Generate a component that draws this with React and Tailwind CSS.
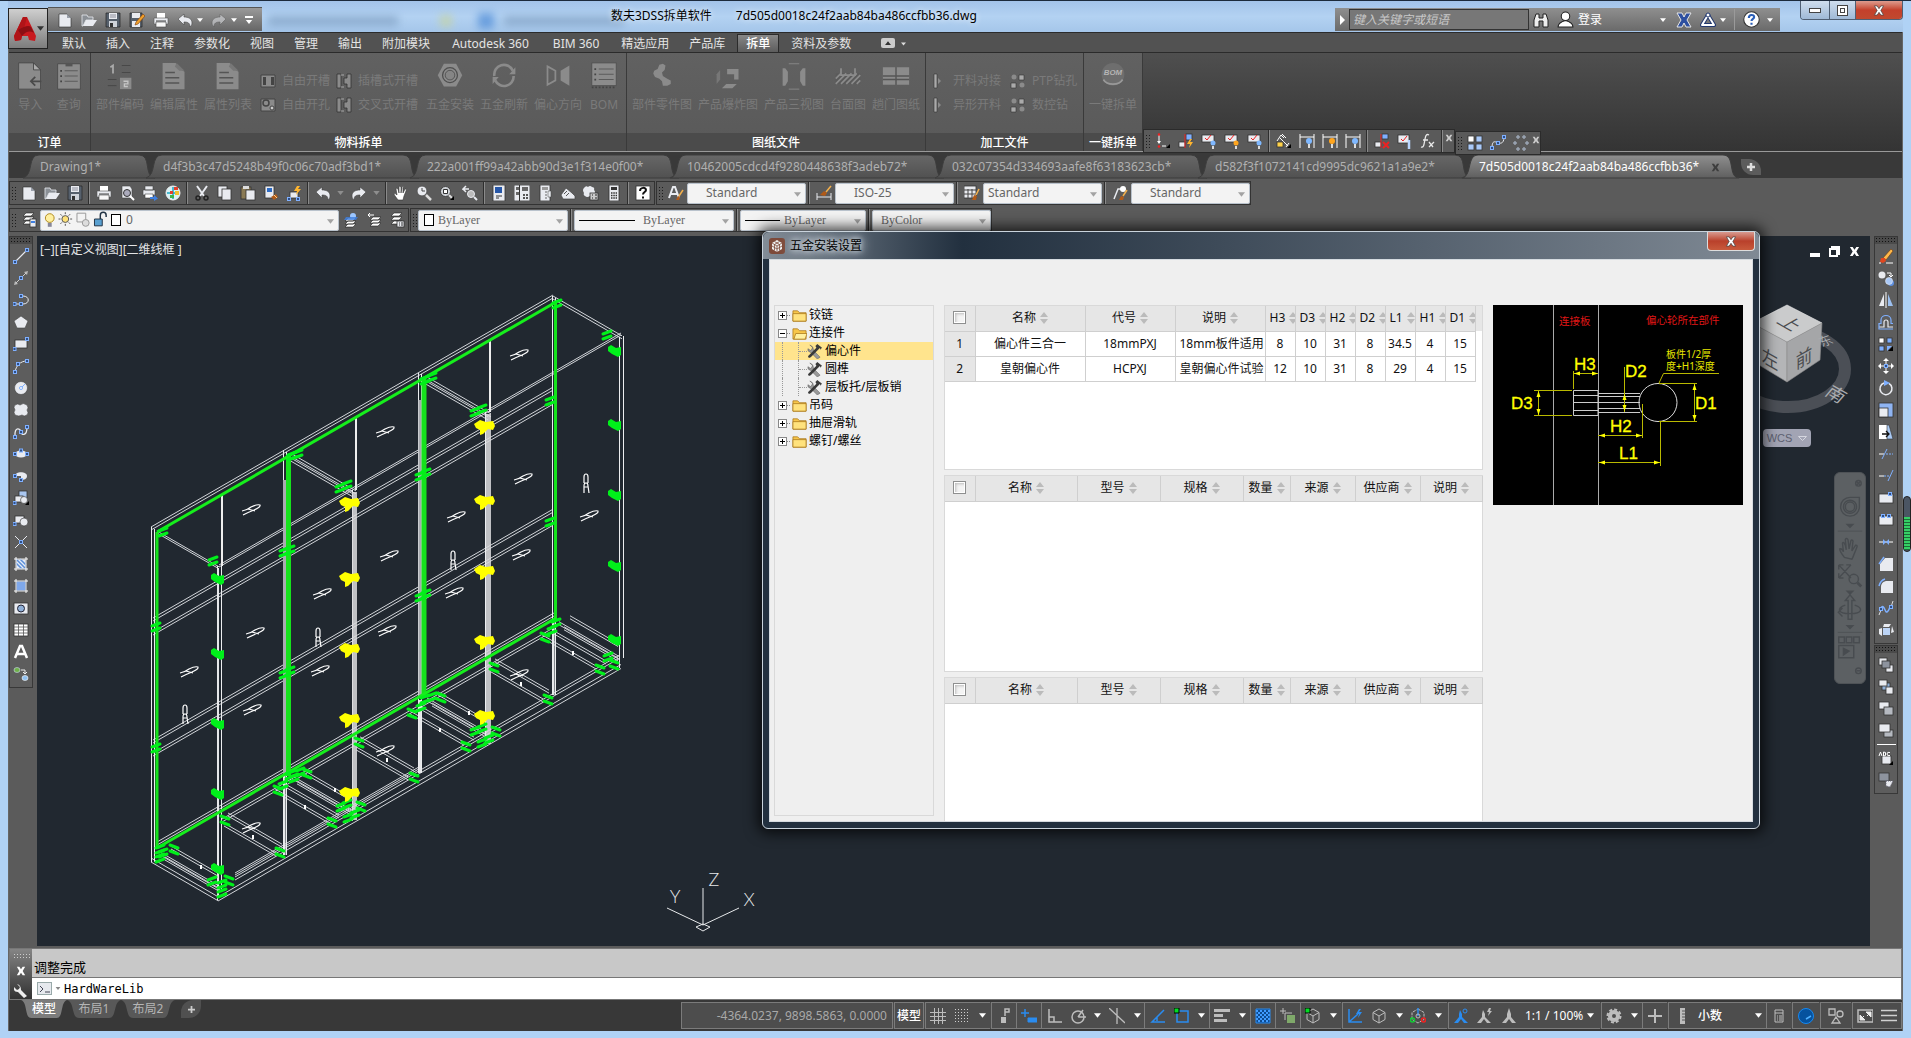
import React from "react";

const W = "#e9ebf0";
const B = "#7fb0ff";
const D = "#2b2b2b";

/* small node marks used by the drawing icons */
const nodes = (pts) =>
  pts.map(([x, y]) => (
    <rect key={x + "-" + y} x={x - 1.5} y={y - 1.5} width="3" height="3" fill="#2f4f86" stroke={B} strokeWidth="1" />
  ));

const page = <path d="M2 2h8l4 4v9H2z" fill={W} stroke={D} strokeWidth=".6" />;
const undoPath = "M1 7l6-5v3c5 0 8 2 8 6 0 2-1 3-2 4 0-4-2-5-6-5v3z";
const box = (x, y, w, h, f = W) => <rect x={x} y={y} width={w} height={h} fill={f} stroke="#333" strokeWidth=".8" />;

const ICONS = {
  new: <>{page}<path d="M10 2v4h4z" fill="#9aa0aa" /></>,
  open: <><path d="M1 3h5l1 2h5v3H5l-3 6H1z" fill="#8b9096" stroke={W} strokeWidth=".8" /><path d="M5 8h11l-4 6H2z" fill={W} /></>,
  save: <><path d="M1 1h14v14H1z" fill="#56606c" stroke="#222" strokeWidth=".7" /><path d="M4 1h8v6H4z" fill={W} /><path d="M4 9h8v6H4z" fill="#cfd3da" /><path d="M5 3h6M5 5h6" stroke="#667" strokeWidth=".7" /><path d="M5 11h3v4H5z" fill="#333" /></>,
  saveas: <><path d="M1 1h12v14H1z" fill="#56606c" stroke="#222" strokeWidth=".7" /><path d="M3 1h8v5H3zM3 9h8v6H3z" fill={W} /><path d="M7 10l7-8 2 2-7 8-3 1z" fill="#f0a02c" stroke="#7a3c10" strokeWidth=".6" /></>,
  print: <><path d="M4 1h8v6H4z" fill="#fff" /><path d="M1 6h14v6H1z" fill={W} stroke="#555" strokeWidth=".6" /><path d="M3 10h10v5H3z" fill="#f7f7f7" stroke="#444" strokeWidth=".6" /><path d="M3 9h10" stroke="#444" /></>,
  preview: <><path d="M3 1h8l2 3v9H3z" fill={W} stroke="#444" strokeWidth=".6" /><circle cx="8" cy="8" r="3.500" fill="#aab" stroke="#333" /><path d="M11 11l4 4" stroke="#fff" strokeWidth="2" /></>,
  publish: <><path d="M3 1h8v4H3zM1 5h12v5H1z" fill={W} stroke="#444" strokeWidth=".6" /><path d="M3 9h8v4H3z" fill="#fff" stroke="#444" strokeWidth=".6" /><path d="M8 12h4v-2l4 3.500-4 2.500v-2H8z" fill="#3f7fe0" /></>,
  globe: <><circle cx="8" cy="8" r="7" fill="#d8f1f5" stroke="#eee" /><path d="M8 2v12M2 8h12" stroke="#1aa7c4" strokeWidth="1.500" /><path d="M9 2h4v3H9zM5 6h3v3H5z" fill="#e0402c" /><path d="M10 6h4v4h-4z" fill="#f0c22c" /><path d="M5 10h4v3H5z" fill="#3bb54a" /></>,
  cut: <><path d="M3 1l7 10M13 1L6 11" stroke={W} strokeWidth="2" /><circle cx="4" cy="13" r="2" fill="none" stroke="#222" strokeWidth="1.500" /><circle cx="12" cy="13" r="2" fill="none" stroke="#222" strokeWidth="1.500" /></>,
  copy: <>{box(1, 1, 9, 11)}{box(5, 4, 9, 11)}</>,
  paste: <>{box(1, 2, 10, 12, "#8a7a55")}<path d="M3 1h6v3H3z" fill="#ddd" />{box(6, 5, 9, 10)}</>,
  match: <>{box(2, 1, 9, 12)}<path d="M4 3h5v4H4z" fill="#2e6cc5" /><path d="M8 12l5-3 2 3-4 3z" fill="#b05a18" /><path d="M11 10l3 3" stroke="#ffd28a" /></>,
  block: <>{box(4, 7, 8, 6)}{nodes([[3, 14], [12, 14]])}<path d="M11 1l-3 5h3l-1 4 5-6h-3l2-3z" fill="#ffb52e" /></>,
  undo: <path d={undoPath} fill={W} stroke="#444" strokeWidth=".6" />,
  redo: <g transform="matrix(-1 0 0 1 16 0)"><path d={undoPath} fill={W} stroke="#444" strokeWidth=".6" /></g>,
  hand: <path d="M5 15c-2-3-4-5-4-6 1-1 2 0 3 1L3 4c0-1 1-1 2 0l1 4V2c0-1 1-1 2 0v6l1-6c1-1 2 0 1 1l0 5 2-4c1 0 2 0 1 2l-2 5-1 4z" fill="#fff" stroke="#333" strokeWidth=".6" />,
  zoom: <><circle cx="6" cy="6" r="5" fill={W} stroke="#555" /><path d="M6 3v3h3" stroke="#444" fill="none" /><path d="M10 10l5 5" stroke="#ddd" strokeWidth="2.500" /></>,
  zoomw: <><circle cx="6.500" cy="6.500" r="5" fill="#cfd3d8" stroke="#444" /><path d="M4.500 4.500h4v4h-4z" fill="#fff" stroke="#333" /><path d="M10 10l3 3" stroke="#ddd" strokeWidth="2" /><path d="M11 15h4v-4z" fill="#000" /></>,
  zoomp: <><path d="M7 4H1l3-3M1 4l3 3" stroke={W} strokeWidth="1.500" fill="none" /><circle cx="9" cy="9" r="3.500" fill="#bbb" stroke={W} /><path d="M12 12l3 3" stroke={W} strokeWidth="2" /></>,
  props: <>{box(2, 0, 12, 16)}<path d="M4 2h7v6H4z" fill="#2757a8" /><path d="M5 11h6M5 13h3" stroke="#333" /></>,
  dc: <>{box(0, 0, 16, 16)}<path d="M2 2h3v3H2zM2 7h3v3H2zM8 2h6v4H8z" fill="#666" /><path d="M5.500 0v16" stroke="#333" /><path d="M9 9h2v2H9zM12 9h2v2h-2zM9 12h2v2H9zM12 12h2v2h-2z" fill="#555" /></>,
  palette: <>{box(3, 0, 10, 16)}<path d="M5 2h6v3H5z" fill="#999" /><path d="M9 6v9" stroke="#666" strokeDasharray="2 1" /><path d="M11 6h3v6h-3z" fill={W} stroke="#444" strokeWidth=".5" /></>,
  sheet: <><path d="M1 10L6 3l6 5 3 3v3H3z" fill={W} stroke="#444" strokeWidth=".7" /><path d="M4 9l3-3M6 11l3-3" stroke="#555" /></>,
  markup: <><path d="M1 3q2-3 4-1 2-2 4 0 3 0 2 3 2 2 0 4-1 3-4 2-3 2-5 0-2-1-1-3-2-3 0-5z" fill={W} />{box(7, 8, 8, 7, "#ccc")}<path d="M9 10h1M12 10h2M9 13h1M12 13h2" stroke="#222" /></>,
  calc: <>{box(3, 0, 10, 16)}<path d="M5 2h6v3H5z" fill="#333" /><path d="M5 8h6M5 10.500h6M5 13h6" stroke="#333" strokeDasharray="1.500 .8" strokeWidth="1.500" /></>,
  help: <>{box(1, 1, 14, 14, "#fff")}<path d="M5 6c0-4 6-4 6-1 0 2-3 2-3 4.500M8 11.500v2" stroke="#111" strokeWidth="2" fill="none" /></>,
  textstyle: <><path d="M1 13L5 2h2l4 11M3 9h6" stroke={W} strokeWidth="2" fill="none" /><path d="M8 15l2-4 2 1-1 3z" fill="#b05a18" /><path d="M11 11l4-6" stroke="#f3b04c" strokeWidth="1.500" /></>,
  dimstyle: <><path d="M1 8v7M15 8v7M1 12h14" stroke={W} fill="none" /><path d="M4 10l4-4 3 2-2 3z" fill="#b05a18" /><path d="M10 7l5-6" stroke="#f3b04c" strokeWidth="1.500" /></>,
  tablestyle: <>{box(0, 1, 12, 12)}<path d="M0 5h12M0 9h12M4 4v9M8 4v9" stroke="#444" /><path d="M8 15l2-5 3 1-1 4z" fill="#b05a18" /><path d="M12 10l3-6" stroke="#f3b04c" strokeWidth="1.500" /></>,
  mleader: <><path d="M2 14L6 4h3" stroke={W} fill="none" strokeWidth="1.500" /><circle cx="11" cy="4" r="3" fill="#fff" /><path d="M7 15l2-4 3 1-1 3z" fill="#b05a18" /><path d="M11 11l4-6" stroke="#f3b04c" strokeWidth="1.500" /></>,
  layerprop: <><path d="M5 1h8l-3 3H2zM5 5h8l-3 3H2zM5 9h8l-3 3H2z" fill="#fff" stroke="#222" strokeWidth=".6" />{box(9, 7, 6, 8)}<path d="M10 9h4v2h-4z" fill="#3f7fe0" /></>,
  layercur: <><path d="M5 6h8l-3 3H2zM5 9h8l-3 3H2zM5 12h8l-3 3H2z" fill="#fff" stroke="#222" strokeWidth=".6" /><circle cx="10" cy="4" r="3" fill="#9cc6ff" /><path d="M3 5h12l-2 3H1z" fill="#3f7fe0" opacity=".8" /></>,
  layerprev: <><path d="M7 5h8l-3 3H4zM7 8h8l-3 3H4zM7 11h8l-3 3H4z" fill="#fff" stroke="#222" strokeWidth=".6" /><path d="M8 3H2l2-2M2 3l2 2" stroke="#fff" fill="none" /></>,
  layerstate: <><path d="M5 1h8l-3 3H2zM5 5h8l-3 3H2zM5 9h8l-3 3H2z" fill="#fff" stroke="#222" strokeWidth=".6" />{box(8, 9, 7, 6)}<path d="M10 11h1M12 11h2M10 13h1M12 13h2" stroke="#333" /></>,
  line: <><path d="M2 14L14 2" stroke={W} strokeWidth="1.200" />{nodes([[2, 14], [14, 2]])}</>,
  xline: <><path d="M1 15l4-1-3-3zM15 1l-4 1 3 3z" fill="#bbb" /><path d="M3 13L13 3" stroke="#ccc" />{nodes([[8, 8]])}</>,
  pline: <><path d="M2 12h8c7 0 7-8 0-8H8" stroke={W} fill="none" />{nodes([[1.500, 12], [8, 12], [8, 4]])}</>,
  polygon: <path d="M8 2l7 5-3 7H4L1 7z" fill={W} stroke="#444" strokeWidth=".6" />,
  rect: <>{box(2, 4, 12, 8)}{nodes([[1.500, 13], [14, 3]])}</>,
  arc: <><path d="M2 14C3 8 7 3 14 3" stroke={W} fill="none" />{nodes([[2, 14], [5, 6], [14, 3]])}</>,
  circle: <><circle cx="8" cy="8" r="6.500" fill={W} stroke="#444" strokeWidth=".6" /><circle cx="8" cy="8" r="1.500" fill="#fff" stroke={B} /><path d="M9 7l3-3" stroke={B} /></>,
  cloud: <path d="M2 3q3-2 5 0 3-3 7 0 2 3 0 5 2 3 0 5-3 2-5 0-3 2-7 0-2-3 0-5-2-3 0-5z" fill={W} stroke="#444" strokeWidth=".6" />,
  spline: <><path d="M2 13C1 1 8 5 8 8s6 5 6-5" stroke={W} fill="none" strokeWidth="1.300" />{nodes([[2, 13], [8, 8], [14, 3]])}</>,
  ellipse: <><ellipse cx="8" cy="8" rx="6" ry="3.500" fill={W} />{nodes([[2, 8], [14, 8], [8, 4.500]])}</>,
  ellarc: <><path d="M2 8C2 3 14 3 14 8 14 11 11 12 8 12V8z" fill={W} />{nodes([[2, 8], [8, 12]])}</>,
  insert: <>{box(6, 1, 8, 8, "#a9c6ef")}{box(2, 6, 8, 6)}<circle cx="11" cy="10" r="3.500" fill={W} stroke="#333" strokeWidth=".6" /><path d="M12 15h4v-4z" fill="#000" />{nodes([[1.500, 13]])}</>,
  mkblock: <>{box(2, 4, 9, 7)}<circle cx="11" cy="10" r="4" fill={W} stroke="#333" strokeWidth=".6" />{nodes([[1.500, 12]])}</>,
  point: <><path d="M2 2l12 12M14 2L2 14" stroke={W} />{nodes([[8, 8]])}</>,
  hatch: <>{box(3, 3, 10, 10, "#e4ecf8")}<path d="M3 3l10 10M3 7l6 6M7 3l6 6" stroke="#5c8fd8" strokeWidth="1.500" /><path d="M1 3h14M1 13h14M3 1v14M13 1v14" stroke="#fff" strokeWidth="1" /></>,
  gradient: <>{box(3, 3, 10, 10, "#7fa8ea")}<path d="M1 3h14M1 13h14M3 1v14M13 1v14" stroke="#fff" strokeWidth="1" /></>,
  region: <>{box(1, 3, 14, 11)}<circle cx="8" cy="8.500" r="3.500" fill="#8fb0d8" stroke="#223" /></>,
  table: <>{box(1, 2, 14, 12, "#fff")}<path d="M1 5h14M1 8h14M1 11h14M5.500 2v12M10.500 2v12" stroke="#555" strokeWidth=".8" /></>,
  mtext: <path d="M2 14L7 2h2l5 12M4.500 10h7" stroke="#fff" strokeWidth="2.500" fill="none" />,
  addsel: <><ellipse cx="4" cy="4" rx="3" ry="2.500" fill="#6fb04a" stroke="#cde" strokeWidth=".6" /><ellipse cx="12" cy="12" rx="3" ry="2.500" fill="#8fc0f0" stroke="#fff" strokeWidth=".6" /><path d="M8 4h4v4l-2-2M12 8l2-2" stroke="#eee" fill="none" /></>,
  erase: <><path d="M5 10l8-9 2 2-7 9z" fill="#ffb84a" stroke="#6b3a10" strokeWidth=".6" /><path d="M3 10l4 0 1 3-3 2-3-1z" fill="#e1471f" /><path d="M1 15h2M8 15h7" stroke="#fff" /></>,
  copyobj: <><circle cx="4" cy="5" r="3.500" fill={W} /><circle cx="13" cy="13" r="3" fill="#5d8fe0" /><circle cx="11" cy="11" r="3.500" fill="#a9c9f8" stroke={W} strokeWidth=".6" /><path d="M9 3h4v4M11 5l2 2 2-2" stroke="#fff" fill="none" /></>,
  mirror: <><path d="M6 2v12H1z" fill={W} /><path d="M10 2v12h5z" fill="#9cc0f0" /><path d="M8 0v16" stroke="#fff" /></>,
  offset: <><path d="M1 13h5V8a2 2 0 0 1 4 0v5h5" stroke={W} fill="none" strokeWidth="1.200" /><path d="M15 9.500h-2V6C13 0 3 0 3 6v3.500H1v5.500h14" stroke={B} fill="none" strokeWidth="1.200" /></>,
  array: <>{box(1, 2, 5, 5, "#fff")}{box(9, 2, 5, 5, B)}{box(1, 10, 5, 5, B)}<path d="M9 15v-5h5z" fill={B} /><path d="M10 15h5v-5z" fill="#000" /></>,
  move: <><path d="M8 0l3 3H5zM8 16l3-3H5zM0 8l3-3v6zM16 8l-3-3v6z" fill="#fff" /><path d="M8 3v10M3 8h10" stroke="#fff" />{nodes([[8, 8]])}</>,
  rotate: <><path d="M6 3a6 6 0 1 0 5 .5" stroke={W} fill="none" strokeWidth="1.500" /><path d="M6 0l6 3-6 3z" fill={B} /></>,
  scale: <>{box(1, 1, 14, 14, "#8fb4f2")}{box(1, 6, 9, 9)}</>,
  stretch: <><path d="M1 1h8v14H1z" fill="#fff" /><path d="M9 1h2l4 14H9z" fill="#a9c9f4" stroke="#333" strokeWidth=".6" /><path d="M4 10h7M8 7l3 3-3 3" stroke="#111" fill="none" strokeWidth="1.300" /></>,
  trim: <><path d="M1 8h5" stroke="#fff" /><path d="M4 13L9 3" stroke={B} /><path d="M8 8h7" stroke={B} strokeDasharray="2 1" /></>,
  extend: <><path d="M1 8h5" stroke="#fff" /><path d="M6 8h5" stroke={B} strokeDasharray="2 1" /><path d="M10 13l5-11" stroke={B} /></>,
  breakpt: <>{box(1, 4, 14, 9)}{nodes([[12, 4]])}</>,
  brk: <>{box(1, 4, 14, 9)}{nodes([[5, 4], [11, 4]])}</>,
  join: <><path d="M1 8h14" stroke="#fff" /><path d="M5 5v6l3-3zM11 5v6L8 8z" fill={B} /></>,
  chamfer: <><path d="M2 15V8l5-6h8v13z" fill={W} /><path d="M1 8l5-7" stroke={B} strokeWidth="1.500" /></>,
  fillet: <><path d="M3 15V9c0-4 3-6 6-6h6v12z" fill={W} /><path d="M1 8c1-4 3-6 6-7" stroke={B} strokeWidth="1.500" fill="none" /></>,
  blend: <><path d="M1 15l2-5M13 7l2-6" stroke="#ddd" /><path d="M3 8c3-5 4 5 6 4s2-3 3-5" stroke={B} fill="none" strokeWidth="1.500" />{nodes([[3, 9], [13, 7]])}</>,
  explode: <><path d="M5 6h7v7H5z" fill="#bcd4f6" /><path d="M6 2h7l-2 3H5zM14 4l2 6-3 1zM1 7l3-1v8l-3-2z" fill={W} /></>,
  front: <>{box(1, 1, 8, 7)}{box(8, 8, 7, 7)}{box(4, 4, 8, 7, "#8d939e")}</>,
  back: <>{box(4, 4, 8, 7, "#8fb0d8")}{box(1, 1, 8, 6)}{box(8, 8, 7, 7)}</>,
  above: <>{box(1, 1, 10, 7)}{box(6, 6, 9, 8, "#b5b9c0")}</>,
  under: <>{box(6, 7, 9, 7, "#b5b9c0")}{box(1, 1, 11, 8)}</>,
  textfront: <>{box(4, 6, 9, 8)}<path d="M1 6l1.500-4L4 6M5.500 6V2q3 0 2 2 1 2-2 2M12 2.500q-3-1-3 1.500t3 1.500" stroke="#fff" fill="none" /><path d="M11 15h4v-4z" fill="#000" /></>,
  hatchback: <>{box(1, 1, 10, 8, "#8d939e")}<path d="M8 9h7l-3 6-4-1z" fill={W} stroke="#667" strokeDasharray="1 1" /></>,
  dimcon: <><path d="M4 2v6M7 13h4" stroke="#fff" /><path d="M4 11l-2-3h4z" fill="#fff" /><circle cx="4" cy="1.500" r="1.300" fill="#e22" /><circle cx="4" cy="13.500" r="1.300" fill="#e22" /><path d="M11 15h4v-4z" fill="#000" /></>,
  autocon: <>{box(8, 1, 6, 6, B)}{box(1, 9, 6, 5)}<path d="M7 1v14" stroke="#e22" /><path d="M12 6l-3 5h3l-1 4 4-6h-3l2-3z" fill="#ffb52e" /></>,
  conshow: <>{box(1, 2, 12, 7)}<path d="M4 5l2 2 4-5" stroke="#e22" fill="none" /><circle cx="12" cy="10" r="2.500" fill="#7fb8ff" /><path d="M11 13h2v3h-2z" fill="#ddd" /></>,
  conshow2: <>{box(1, 2, 12, 7)}<path d="M4 5l2 2 4-5" stroke="#e22" fill="none" /><circle cx="12" cy="10" r="2.500" fill="#ffa51e" /><path d="M11 13h2v3h-2z" fill="#ddd" /></>,
  linlock: <><path d="M4 5l8 8M6 1l4 4M13 10l-3 4" stroke="#fff" /><path d="M1 8l4-6 3 3" stroke="#fff" fill="none" />{box(1, 9, 6, 5, "#ffd24a")}<path d="M11 15h4v-4z" fill="#000" /></>,
  dimshow: <><path d="M1 1v14M15 1v14M1 4h14" stroke="#fff" /><circle cx="10" cy="8" r="3" fill="#7fb8ff" /><path d="M9 11h2v4H9z" fill="#ddd" /></>,
  dimshow2: <><path d="M1 1v14M15 1v14M1 4h14" stroke="#fff" /><circle cx="10" cy="8" r="3" fill="#ffa51e" /><path d="M9 11h2v4H9z" fill="#ddd" /></>,
  delcon: <>{box(8, 1, 6, 5, B)}{box(1, 9, 6, 5)}<path d="M7 1v14" stroke="#e22" /><path d="M9 9l6 6M15 9l-6 6" stroke="#e22" strokeWidth="2" /></>,
  conset: <>{box(1, 2, 11, 8)}<path d="M4 6l2 2 4-5" stroke="#e22" fill="none" /><path d="M12 7v9" stroke="#b9d6ff" strokeWidth="2.500" /></>,
  fx: <path d="M1 14c3 1 3-3 4-8s2-5 4-4M3 7h5M9 9l4 5M14 9l-5 5" stroke="#e8e8e8" strokeWidth="1.300" fill="none" />,
  arr1: <>{box(1, 1, 6, 6, "#fff")}{box(9, 1, 6, 6, "#a9c9f8")}{box(1, 9, 6, 6, "#a9c9f8")}{box(9, 9, 6, 6, "#a9c9f8")}</>,
  arr2: <><path d="M2 13C2 3 7 8 8 8s6 2 6-6" stroke={W} fill="none" />{nodes([[2, 13], [8, 8], [14, 2]])}</>,
  arr3: <g fill="#333" stroke="#cfe0f8" strokeWidth=".8"><path d="M4 1h2v2H4zM10 1h2v2h-2zM1 7h2v2H1zM13 7h2v2h-2zM4 13h2v2H4zM10 13h2v2h-2z" /></g>,
};

function Icon({ n, className = "size-4" }) {
  return (
    <svg viewBox="0 0 16 16" className={className} aria-hidden="true">
      {ICONS[n]}
    </svg>
  );
}

function Down({ className = "w-2 h-[5px] text-white" }) {
  return (
    <svg viewBox="0 0 8 5" className={className} aria-hidden="true">
      <path d="M0 0h8L4 5z" fill="currentColor" />
    </svg>
  );
}

const Grip = () => (
  <span className="mx-px my-1 w-[5px] shrink-0 self-stretch bg-[radial-gradient(#1d1d1d_1px,transparent_1px)] bg-[size:3px_3px]" />
);
const Sep = () => <span className="mx-[2px] w-[2px] shrink-0 self-stretch border-l border-[#2e2e2e] bg-[#8a8a8a]" />;

const Tool = ({ n }) => (
  <button aria-label={n} className="grid h-full w-[23px] shrink-0 place-items-center">
    <Icon n={n} />
  </button>
);

function ToolRun({ items }) {
  return items.map((n, i) => {
    if (n === "|") return <Sep key={i} />;
    if (n === "v")
      return (
        <button key={i} aria-label="more" className="grid w-[13px] place-items-center">
          <Down className="h-1 w-[7px] text-[#8e8e8e]" />
        </button>
      );
    return <Tool key={i} n={n} />;
  });
}

function Combo({ label, value, width, pad = "pl-[18px]", font = "", children }) {
  return (
    <div className={"relative flex h-[21px] shrink-0 items-center rounded-[2px] border border-[#b9c2cc] bg-[#f3f3f3] text-[#666] " + width}>
      {children}
      <select
        aria-label={label}
        className={"h-full min-w-0 flex-1 appearance-none bg-transparent text-xs leading-[18px] outline-none " + pad + " " + font}
      >
        <option>{value}</option>
      </select>
      <Down className="pointer-events-none absolute right-1 top-2 h-[5px] w-[7px] text-[#a3a3a3]" />
    </div>
  );
}

/* ---------- title bar and menu ---------- */

function TitleBar() {
  return (
    <header className="relative flex h-[31px] shrink-0 items-start bg-gradient-to-b from-[#a3c3ea] via-[#b3d2f2] to-[#a5c6ea]">
      <div className="pointer-events-none absolute inset-0 overflow-hidden">
        <div className="ml-[190px] mt-3 flex items-center gap-[10px] opacity-70 blur-[4px]">
          <span className="h-3 w-[60px] bg-[#d4e8fb]" />
          <span className="h-[10px] w-[130px] bg-[#7f9fc2]" />
          <span className="ml-8 h-3 w-3 bg-[#c9d49a]" />
          <span className="ml-4 h-4 w-4 bg-[#4c8ad6]" />
          <span className="h-[10px] w-[120px] bg-[#7f9fc2]" />
        </div>
      </div>
      <div className="relative ml-[40px] mt-[6px] flex h-[24px] w-[214px] items-center gap-2 border-t border-[#555] bg-gradient-to-b from-[#9a9a9a] to-[#666] pl-[9px]">
        {["new", "open", "save", "saveas", "print", "undo"].map((n) => (
          <button key={n} aria-label={n}><Icon n={n} /></button>
        ))}
        <Down className="-ml-1 h-1 w-[6px] text-white" />
        <button aria-label="redo" className="opacity-50"><Icon n="redo" /></button>
        <Down className="-ml-1 h-1 w-[6px] text-white" />
        <span className="border-t-2 border-white pt-[2px]"><Down className="h-1 w-[8px] text-white" /></span>
      </div>
      <h1 className="pointer-events-none absolute inset-x-0 top-[7px] ml-[603px] flex gap-6 text-xs leading-4 text-black [text-shadow:0_0_6px_white]">
        <span>数夫3DSS拆单软件</span>
        <span>7d505d0018c24f2aab84ba486ccfbb36.dwg</span>
      </h1>
      <div className="relative ml-auto mr-5 mt-[7px] flex h-[23px] w-[445px] items-center bg-gradient-to-b from-[#8f8f8f] to-[#6a6a6a] text-xs text-white">
        <svg viewBox="0 0 14 10" className="h-[10px] w-[14px]"><path d="M5 0l5 5-5 5z" fill="#fff" /></svg>
        <input aria-label="搜索" placeholder="键入关键字或短语" className="h-[21px] w-[180px] border border-[#333] bg-[#777] px-[3px] italic placeholder:text-[#c8c8c8]" />
        <button aria-label="搜索" className="ml-1">
          <svg viewBox="0 0 16 16" className="size-4"><path d="M1 15V8l2-6h3v4h4V2h3l2 6v7h-5v-6H6v6z" fill="#eee" stroke="#222" strokeWidth="1" /></svg>
        </button>
        <button className="ml-2 flex items-center gap-1">
          <svg viewBox="0 0 16 16" className="size-[17px]"><circle cx="8" cy="5" r="4" fill="#fff" stroke="#222" /><path d="M1 15q0-4 7-6 7 2 7 6z" fill="#fff" stroke="#222" /></svg>
          登录
        </button>
        <Down className="ml-auto mr-[10px] h-1 w-[6px] text-white" />
        <button aria-label="Exchange"><svg viewBox="0 0 16 16" className="size-4"><path d="M1 1h5l2 4 2-4h5l-4 7 4 7h-5l-2-4-2 4H1l4-7z" fill="#2d4fa0" stroke="#e6e6e6" strokeWidth="1" /></svg></button>
        <button aria-label="A360" className="ml-2"><svg viewBox="0 0 16 16" className="size-4"><path d="M8 3l6 10H2z" fill="none" stroke="#22386f" strokeWidth="4" strokeLinejoin="round" /><path d="M8 3l6 10H2z" fill="none" stroke="#fff" strokeWidth="2" strokeLinejoin="round" /><circle cx="8" cy="3" r="2" fill="#fff" stroke="#22386f" /></svg></button>
        <Down className="ml-1 h-1 w-[6px] text-white" />
        <span className="mx-2 h-[21px] w-px bg-[#9a9a9a]" />
        <button aria-label="帮助"><svg viewBox="0 0 16 16" className="size-[17px]"><circle cx="8" cy="8" r="7.300" fill="#fff" stroke="#333" /><path d="M5.500 6.500c0-3.500 5-3.500 5-.8 0 1.800-2.500 1.800-2.500 3.800M8 11v2" stroke="#2b5fb8" strokeWidth="2" fill="none" /></svg></button>
        <Down className="mx-[7px] h-1 w-[6px] text-white" />
      </div>
      <div className="flex h-[19px] overflow-hidden rounded-b border border-t-0 border-[#4f5f73]">
        <button aria-label="最小化" className="grid w-[28px] place-items-center bg-gradient-to-b from-[#cfdeee] to-[#9fb9d6]"><span className="h-[5px] w-3 border border-[#444] bg-white" /></button>
        <button aria-label="还原" className="grid w-[27px] place-items-center border-x border-[#4f5f73] bg-gradient-to-b from-[#cfdeee] to-[#9fb9d6]"><span className="size-[11px] border border-[#444] bg-white p-[2px]"><span className="block h-full border border-[#444]" /></span></button>
        <button aria-label="关闭" className="grid w-[46px] place-items-center bg-gradient-to-b from-[#dd9b8e] via-[#c4402b] to-[#c0492f]"><Cross className="h-[11px] w-3" /></button>
      </div>
    </header>
  );
}

function Cross({ className, edge = "#444", fill = "#fff" }) {
  return (
    <svg viewBox="0 0 12 12" className={className} aria-hidden="true">
      <path d="M1 1h3l2 3 2-3h3L8 6l3 5H8L6 8l-2 3H1l3-5z" fill={fill} stroke={edge} strokeWidth=".8" />
    </svg>
  );
}

const MENU = ["默认", "插入", "注释", "参数化", "视图", "管理", "输出", "附加模块", "Autodesk 360", "BIM 360", "精选应用", "产品库", "拆单", "资料及参数"];

function MenuRow() {
  return (
    <nav className="flex h-[21px] shrink-0 items-end border-y border-[#2b2b2b] bg-[#525252] pl-[43px] text-xs leading-[17px] text-[#e4e4e4]">
      {MENU.map((m) =>
        m === "拆单" ? (
          <button key={m} className="mx-[2px] h-[18px] border border-b-0 border-[#2b2b2b] bg-gradient-to-b from-[#888] to-[#5d5d5d] px-[8px] font-medium text-white">{m}</button>
        ) : (
          <button key={m} className={"h-[18px] " + (m.endsWith("360") ? "px-3" : "px-[10px]")}>{m}</button>
        )
      )}
      <button aria-label="最小化面板" className="mb-1 ml-5 grid h-[10px] w-[14px] place-items-center rounded-[2px] bg-[#ccc]">
        <Down className="h-1 w-[6px] rotate-180 text-[#333]" />
      </button>
      <Down className="mb-[6px] ml-[6px] h-1 w-[5px] text-[#ddd]" />
    </nav>
  );
}

/* ---------- ribbon ---------- */

const G = "#8b8b8b";
const BIG = {
  import: <><path d="M3 2h17l8 8v22H3z" fill={G} stroke="#4a4a4a" /><path d="M20 2v8h8z" fill="#aaa" stroke="#444" /><path d="M29 23H18m4-5l-5 5 5 5" stroke="#4a4a4a" strokeWidth="2" fill="none" /></>,
  query: <><path d="M3 3h26v29H3z" fill={G} stroke="#4a4a4a" /><path d="M12 2h8v4h-8z" fill="#555" /><path d="M11 11h15M11 17h15M11 23h15" stroke="#555" /><path d="M6 10h2v2H6zM6 16h2v2H6zM6 22h2v2H6z" fill="#444" /></>,
  number: <><path d="M18 5h10M18 13h10M2 21h10M2 28h10" stroke="#454545" /><path d="M16 19h13v13H16z" fill={G} /><path d="M5 7l3-2v9" stroke="#aaa" strokeWidth="2" fill="none" /><path d="M20 23h5v3h-4v3h4" stroke="#c5c5c5" strokeWidth="1.500" fill="none" /></>,
  doc: <><path d="M3 2h15l2 5 8 5v20H3z" fill={G} /><path d="M19 2l9 9h-6l-5-5z" fill="#777" /><path d="M6 13h11M6 19h16M6 25h16" stroke="#555" strokeWidth="1.500" /></>,
  hex: <><path d="M9 3h14l7 13-7 13H9L2 16z" fill={G} /><circle cx="16" cy="16" r="8.500" fill="none" stroke="#4f4f4f" strokeWidth="1.500" /><circle cx="16" cy="16" r="5.500" fill="#858585" stroke="#4f4f4f" /></>,
  refresh: <><path d="M5 17A11 11 0 0 1 26 11M27 17A11 11 0 0 1 6 22" stroke={G} strokeWidth="3" fill="none" /><path d="M29 7v8h-7zM3 26v-8h7z" fill={G} /></>,
  dir: <><path d="M4 6l9 5v11l-9 5z" fill="none" stroke={G} strokeWidth="2" /><path d="M19 11l10-6v23l-10-6z" fill={G} /></>,
  bom: <><path d="M2 2h28v26H2z" fill={G} stroke="#505050" /><path d="M10 9h17M10 15h17M10 21h17" stroke="#555" /><path d="M5 8h2v2H5zM5 14h2v2H5zM5 20h2v2H5z" fill="#444" /><path d="M2 30h28" stroke="#444" strokeWidth="2" strokeDasharray="2 2" /></>,
  part: <path d="M13 4l4-1 3 2-1 5-3 3 1 4 5 3 4 2 0 4-4 2-5 0-1-5-3-3-5-2-2-4 1-3 4-2z" fill={G} />,
  explodeb: <><path d="M15 9h13v12h-5v-6h-8zM9 31l5-5h12l-5 5z" fill={G} /><path d="M3 15l4-5v11l-4 5z" fill="#777" /></>,
  three: <><path d="M3 8h3l3 4v11l-3 5H3zM29 8h-3l-3 4v11l3 5h3z" fill={G} /><path d="M10 3h12M10 32h12" stroke={G} /></>,
  top: <><path d="M2 14h28v12H2z" fill="#5a5a5a" /><path d="M2 20l6-6M2 26l12-12M8 26l12-12M14 26l12-12M20 26l10-10M26 26l4-4" stroke={G} strokeWidth="2" /><path d="M8 8v8h16V8" stroke={G} fill="none" strokeWidth="2" /></>,
  door: <><path d="M1 7h14v20H1zM17 7h14v20H17z" fill={G} /><path d="M1 17h30M1 21h30" stroke="#555" strokeWidth="1.500" /></>,
  ball: <><circle cx="16" cy="15" r="13" fill="#6e6e6e" /><path d="M5 21a12 9 0 0 0 22 0" fill="none" stroke="#999" strokeWidth="2" /><text x="16" y="16" textAnchor="middle" fontSize="9" fontWeight="bold" fontStyle="italic" fill="#b5b5b5" fontFamily="Liberation Sans">BOM</text></>,
};
const SMALL = {
  slot: <><path d="M1 2h14v12H1z" fill={G} stroke="#444" /><path d="M3 4h3v8H3zM11 4h3v8h-3z" fill="#444" /></>,
  hole: <><path d="M1 2h14v12H1z" fill={G} stroke="#444" /><circle cx="6" cy="6" r="3" fill="none" stroke="#444" strokeWidth="1.500" /><circle cx="12" cy="11" r="2" fill="#ccc" stroke="#444" /></>,
  cslot: <><path d="M1 1h4v14H1zM15 1v14h-4v-4H8V5h3V1z" fill={G} stroke="#333" strokeWidth=".8" /><path d="M5 2h3M5 14h3" stroke="#aaa" fill="none" /></>,
  butt: <><path d="M3 1h3v14H3z" fill="#aaa" stroke="#333" strokeWidth=".6" /><path d="M7 5l3 3-3 3z" fill={G} /></>,
  ptp: <><path d="M9 2h5v5H9zM1 10h5v5H1z" fill="#aaa" stroke="#333" strokeWidth=".6" /><circle cx="4" cy="4" r="2.500" fill={G} /><circle cx="12" cy="12" r="2.500" fill={G} /></>,
};

const Big = ({ n, label, w = "w-[48px]" }) => (
  <button className={"flex flex-col items-center gap-[5px] whitespace-nowrap " + w}>
    <svg viewBox="0 0 32 34" className="h-[32px] w-[28px]">{BIG[n]}</svg>
    <span className="leading-4">{label}</span>
  </button>
);
const Small = ({ n, label }) => (
  <button className="flex h-4 items-center gap-[6px] whitespace-nowrap leading-4">
    <svg viewBox="0 0 16 16" className="size-4">{SMALL[n]}</svg>
    {label}
  </button>
);

function Panel({ title, w, pad, children }) {
  return (
    <section className={"flex shrink-0 flex-col border-r border-[#3a3a3a] bg-gradient-to-b from-[#616161] to-[#595959] " + w}>
      <div className={"flex flex-1 items-start pt-[7px] text-xs text-[#7a7a7a] " + pad}>{children}</div>
      <h2 className="h-[18px] bg-[#4b4b4b] text-center text-xs font-medium leading-[19px] text-white">{title}</h2>
    </section>
  );
}

function Ribbon() {
  return (
    <div className="relative z-10 flex h-[99px] shrink-0 border-b border-[#999] bg-gradient-to-b from-[#4f4f4f] to-[#343434]">
      <Panel title="订单" w="w-[82px]" pad="px-[3px] gap-[2px]">
        <Big n="import" label="导入" w="w-[37px]" />
        <Big n="query" label="查询" w="w-[37px]" />
      </Panel>
      <Panel title="物料拆单" w="w-[536px]" pad="pl-[5px] gap-[6px]">
        <Big n="number" label="部件编码" />
        <Big n="doc" label="编辑属性" />
        <Big n="doc" label="属性列表" />
        <div className="ml-[2px] mt-[13px] grid gap-2"><Small n="slot" label="自由开槽" /><Small n="hole" label="自由开孔" /></div>
        <div className="mr-[2px] mt-[13px] grid gap-2"><Small n="cslot" label="插槽式开槽" /><Small n="cslot" label="交叉式开槽" /></div>
        <Big n="hex" label="五金安装" />
        <Big n="refresh" label="五金刷新" />
        <Big n="dir" label="偏心方向" />
        <Big n="bom" label="BOM" w="w-[32px]" />
      </Panel>
      <Panel title="图纸文件" w="w-[299px]" pad="pl-[5px] gap-[6px]">
        <Big n="part" label="部件零件图" w="w-[60px]" />
        <Big n="explodeb" label="产品爆炸图" w="w-[60px]" />
        <Big n="three" label="产品三视图" w="w-[60px]" />
        <Big n="top" label="台面图" w="w-[36px]" />
        <Big n="door" label="趟门图纸" />
      </Panel>
      <Panel title="加工文件" w="w-[158px]" pad="pl-[5px] gap-[9px]">
        <div className="mt-[13px] grid gap-2"><Small n="butt" label="开料对接" /><Small n="butt" label="异形开料" /></div>
        <div className="mt-[13px] grid gap-2"><Small n="ptp" label="PTP钻孔" /><Small n="ptp" label="数控钻" /></div>
      </Panel>
      <Panel title="一键拆单" w="w-[59px]" pad="pl-[5px]">
        <Big n="ball" label="一键拆单" />
      </Panel>
      <div className="-mb-[2px] flex h-6 items-center self-end border border-[#2b2b2b] bg-[#5a5a5a]">
        <Grip />
        <ToolRun items={["dimcon", "autocon", "conshow", "conshow2", "conshow", "|", "linlock", "dimshow", "dimshow2", "dimshow", "|", "delcon", "conset", "fx", "|"]} />
        <button aria-label="关闭工具栏" className="w-[9px] self-start pt-1"><Cross className="size-2" edge="none" fill="#ccc" /></button>
      </div>
      <div className="-mb-1 flex h-6 items-center self-end border border-[#2b2b2b] bg-[#5a5a5a]">
        <Grip />
        <ToolRun items={["arr1", "arr2", "arr3"]} />
        <button aria-label="关闭工具栏" className="w-[8px] self-start pt-1"><Cross className="size-2" edge="none" fill="#ccc" /></button>
      </div>
    </div>
  );
}

/* ---------- document tabs ---------- */

const DOCS = [
  ["Drawing1*", "w-[123px]"],
  ["d4f3b3c47d5248b49f0c06c70adf3bd1*", "w-[264px]"],
  ["222a001ff99a42abb90d3e1f314e0f00*", "w-[260px]"],
  ["10462005cdcd4f9280448638f3adeb72*", "w-[265px]"],
  ["032c07354d334693aafe8f63183623cb*", "w-[263px]"],
  ["d582f3f1072141cd9995dc9621a1a9e2*", "w-[264px]"],
  ["7d505d0018c24f2aab84ba486ccfbb36*", "w-[268px]"],
];

function DocTabs() {
  return (
    <div className="flex h-[26px] shrink-0 items-end bg-[#393939] pl-[17px]" role="tablist">
      {DOCS.map(([t, w], i) => {
        const on = i === DOCS.length - 1;
        return (
          <button key={t} role="tab" aria-selected={on} className={"relative h-[23px] shrink-0 pl-[14px] text-left text-xs leading-[22px] " + w + (on ? " text-white" : " text-[#b0b0b0]")}>
            <svg viewBox={i === 0 ? "0 0 123 23" : "0 0 264 23"} preserveAspectRatio="none" className="absolute inset-0 h-full w-full overflow-visible">
              <defs>
                <linearGradient id={"tab" + i} x1="0" x2="0" y1="0" y2="1">
                  <stop offset="0" stopColor={on ? "#8f8f8f" : "#676767"} />
                  <stop offset="1" stopColor={on ? "#5f5f5f" : "#515151"} />
                </linearGradient>
              </defs>
              <path d={i === 0 ? "M-3 23C8 20 1 0 13 0H113C126 0 117 21 129 23z" : "M-3 23C8 20 1 0 13 0H254C267 0 258 21 270 23z"} fill={`url(#tab${i})`} stroke="#3c3c3c" />
            </svg>
            <span className="relative">{t}</span>
            {on && <Cross className="relative ml-3 inline size-[9px]" edge="none" fill="#3e3e3e" />}
          </button>
        );
      })}
      <button aria-label="新图形" className="mb-[3px] ml-[8px] grid h-4 w-[20px] place-items-center rounded-bl-xl rounded-tr-xl bg-[#5c5c5c]">
        <svg viewBox="0 0 8 8" className="size-2"><path d="M4 0v8M0 4h8" stroke="#ddd" strokeWidth="2.500" /></svg>
      </button>
    </div>
  );
}

/* ---------- tool rows ---------- */

function ToolRows() {
  return (
    <div className="shrink-0 bg-[#5b5b5b] pb-1 pt-[3px]">
      <div className="flex h-[24px]">
        <div className="flex items-center border border-[#333]">
          <Grip />
          <ToolRun items={["new", "open", "save", "|", "print", "preview", "publish", "globe", "|", "cut", "copy", "paste", "match", "block", "|", "undo", "v", "redo", "v", "|", "hand", "zoom", "zoomw", "zoomp", "|", "props", "dc", "palette", "sheet", "markup", "calc", "|", "help"]} />
        </div>
        <div className="ml-px flex items-center border border-[#333]">
          <Grip />
          <Tool n="textstyle" />
          <Combo label="文字样式" value="Standard" width="w-[119px]" />
          <Sep /><Tool n="dimstyle" />
          <Combo label="标注样式" value="ISO-25" width="w-[119px]" />
          <Sep /><Tool n="tablestyle" />
          <Combo label="表格样式" value="Standard" width="w-[119px]" pad="pl-1" />
          <Sep /><Tool n="mleader" />
          <Combo label="多重引线样式" value="Standard" width="w-[119px]" />
        </div>
      </div>
      <div className="mt-[3px] flex h-[24px]">
        <div className="flex items-center border border-[#333]">
          <Grip />
          <Tool n="layerprop" />
          <Combo label="图层" value="0" width="w-[299px]" pad="pl-[5px]">
            <svg viewBox="0 0 72 18" className="h-[18px] w-[70px]" aria-hidden="true">
              <circle cx="9" cy="7" r="4.500" fill="#fff0a0" stroke="#b08a20" /><path d="M7 12h4v4H7z" fill="#889" />
              <circle cx="25" cy="8" r="3.500" fill="#ffe27a" stroke="#555" /><path d="M25 1v2M25 13v2M18 8h2M30 8h2M20 3l1.500 1.500M30 3l-1.500 1.500M20 13l1.500-1.500M30 13l-1.500-1.500" stroke="#555" />
              <path d="M37 2h9v9h-9z" fill="none" stroke="#999" /><circle cx="46" cy="12" r="3.500" fill="#ddd" stroke="#999" />
              <path d="M55 8h8v7h-8z" fill="#5aa0d0" stroke="#234" /><path d="M61 8V4a3 3 0 0 1 6 0v2" fill="none" stroke="#234" strokeWidth="1.500" />
            </svg>
            <span className="h-3 w-[10px] shrink-0 border border-black bg-white" />
          </Combo>
          <ToolRun items={["layercur", "layerprev", "layerstate"]} />
        </div>
        <div className="ml-px flex items-center border border-[#333]">
          <Grip />
          <Combo label="颜色" value="ByLayer" width="w-[150px]" pad="pl-1" font="font-['Liberation_Serif']">
            <span className="ml-[5px] h-3 w-[10px] shrink-0 border border-black bg-white" />
          </Combo>
          <Sep />
          <Combo label="线型" value="ByLayer" width="w-[160px]" pad="pl-[8px]" font="font-['Liberation_Serif']">
            <span className="ml-1 h-px w-[56px] bg-black" />
          </Combo>
          <Sep />
          <Combo label="线宽" value="ByLayer" width="w-[126px]" pad="pl-1" font="font-['Liberation_Serif']">
            <span className="ml-1 h-px w-[35px] bg-black" />
          </Combo>
          <Sep />
          <Combo label="打印样式" value="ByColor" width="w-[119px]" pad="pl-2" font="font-['Liberation_Serif']" />
        </div>
      </div>
    </div>
  );
}

function SideBar({ items }) {
  return (
    <div className="flex w-6 shrink-0 flex-col items-center border border-[#383838] bg-[#5d5d5d] pb-[2px]">
      <span className="mb-px h-[7px] w-full bg-[#4a4a4a] bg-[radial-gradient(#111_1px,transparent_1px)] bg-[size:3px_3px]" />
      {items.map((n) => (
        <React.Fragment key={n}>
          {n === "textfront" && <span className="my-[2px] h-px w-[19px] bg-white" />}
          <button aria-label={n} className="grid h-[22px] w-full place-items-center"><Icon n={n} /></button>
        </React.Fragment>
      ))}
    </div>
  );
}

/* ---------- model drawing ---------- */

const S = 0.577;
/* run: parallel pair of edges along the cabinet length (k=-1) or depth (k=1) */
function run(x, y, len, k, gap = 3) {
  const dy = k * S * len;
  return `M${x} ${y}l${len} ${dy.toFixed(1)}M${x} ${y + gap}l${len} ${dy.toFixed(1)}`;
}
const backY = (x) => 848 - (x - 157) * S;

function cabinetPath() {
  const p = [];
  p.push(run(151, 527, 402, -1), run(553, 296, 69, 1), run(219, 565, 402, -1, 2));
  [618, 632, 740, 753].forEach((y) => p.push(run(153, y, 400, -1)));
  p.push(run(157, 531, 62, 1, 2), run(289, 457, 64, 1, 3), run(292, 454, 64, 1, 3), run(424, 380, 64, 1, 3), run(427, 377, 64, 1, 3));
  p.push(run(157, 842, 399, -1, 3), run(222, 819, 334, -1, 3));
  p.push(run(218, 897, 403, -1, 4), run(235, 877, 385, -1, 3), run(235, 873, 185, -1, 2));
  p.push(run(151, 858, 67, 1, 4));
  [157, 289, 424, 556].forEach((x) => {
    const y = backY(x);
    p.push(run(x + 3, y + 4, 60, 1, 3), run(x + 8, y + 9, 54, 1, 3), run(x + 14, y - 2, 48, 1, 3));
    if (x !== 157) p.push(run(x - 14, y + 17, 54, 1, 3), run(x - 4, y + 12, 54, 1, 3));
    if (x !== 556) p.push(run(x + 71, y - 35, 54, 1, 3), run(x + 67, y - 25, 52, 1, 3));
  });
  return p.join("");
}

const GRAIN = [[251, 510], [255, 633], [189, 672], [252, 710], [322, 594], [320, 671], [385, 432], [389, 556], [387, 631], [519, 355], [523, 479], [521, 555], [456, 517], [454, 593], [589, 516], [251, 828], [385, 751], [519, 675]];
const GRAINV = [[185, 714], [318, 637], [453, 560], [586, 483]];
const BOLTS = [[218, 579], [218, 654], [218, 724], [218, 794], [218, 869], [615, 351], [615, 425], [615, 495], [615, 566], [615, 640]];
const CAMS = [[349, 503], [349, 578], [349, 649], [349, 719], [349, 793], [484, 426], [484, 501], [484, 571], [484, 641], [484, 716]];
/* connector pairs rising to the right, and falling to the right */
const CLIPS_UP = [[163, 531], [213, 560], [156, 626], [156, 747], [284, 551], [290, 549], [284, 673], [290, 670], [292, 455], [298, 453], [340, 487], [347, 484], [420, 475], [426, 472], [420, 596], [426, 593], [425, 379], [432, 376], [475, 411], [482, 408], [550, 400], [550, 521], [557, 303], [607, 334], [160, 848], [163, 852], [290, 774], [294, 777], [300, 771], [283, 784], [341, 806], [347, 803], [348, 817], [355, 813], [425, 698], [432, 696], [421, 706], [475, 730], [482, 727], [482, 742], [489, 738], [556, 622], [552, 629], [608, 656], [222, 883], [212, 880], [222, 892], [160, 857]];
const CLIPS_DOWN = [[225, 820], [278, 790], [280, 852], [174, 849], [229, 880], [307, 773], [332, 822], [361, 806], [359, 742], [414, 777], [412, 713], [441, 697], [466, 746], [494, 667], [496, 731], [545, 637], [548, 699], [600, 669], [614, 664]];

function Model() {
  return (
    <svg className="absolute inset-0 h-full w-full" aria-label="柜体线框模型">
      <g transform="translate(-37 -236)">
        <path d={cabinetPath()} fill="none" stroke="#d2d5d9" strokeWidth="1" />
        <path d="M151.500 527V862M154.500 529V862M217.500 566V900M221.500 566V890M283.500 450V855M286.500 452V855M352.500 490V821M418.500 373V773M421.500 374V773M485.500 412V745M552.500 296V695M555.500 298V695M619.500 337V668M623.500 336V658" stroke="#eceef0" fill="none" />
        <path d="M222 494V566M356 417V490M490 339V412" stroke="#eee" strokeWidth="2" />
        <path d="M218 568V898M284.500 776V855M420 700V773M553.500 622V695" stroke="#e6e8ea" strokeWidth="2" />
        <path d="M354.500 492V820M488.500 414V744" stroke="#dcdcde" strokeWidth="5" opacity=".85" />
        <path d="M284.500 480V776M420 400V698" stroke="#a9abb0" strokeWidth="3" />
        <path d="M157 532V848M555.500 303V621" stroke="#16e21c" strokeWidth="3" />
        <path d="M288.500 455V776M424 378V698" stroke="#16e21c" strokeWidth="5" />
        <path d="M157 532L556 302M157 848L556 618" stroke="#16ee1c" strokeWidth="3" />
        <g fill="none" stroke="#fff" strokeWidth="1.200">
          {GRAIN.map(([x, y]) => (
            <path key={x + "," + y} transform={`translate(${x} ${y})`} d="M-8 5Q-2 2 3 0 10-3 9-5 6-6 0-3-4 0-9 1M-3-1L4 1" />
          ))}
          {GRAINV.map(([x, y]) => (
            <path key={x + "," + y} transform={`translate(${x} ${y})`} d="M-2 10V3Q-2 0 0 0T2 3L3 10M-2 0V-6Q-2-9 0-9T2-6V0M-2 0H2M-2 4H2" />
          ))}
        </g>
        <path d="M200 865h2v4h-2zM252 835h2v4h-2zM304 805h2v4h-2zM386 758h2v4h-2zM334 788h2v4h-2zM439 728h2v4h-2zM468 711h2v4h-2zM520 682h2v4h-2zM572 651h2v4h-2z" fill="#fff" />
        <g fill="none" stroke="#00f01a" strokeWidth="3" strokeLinecap="round">
          {CLIPS_UP.map(([x, y]) => (
            <path key={x + "," + y} transform={`translate(${x} ${y})`} d="M-4 0L4-3M-4 5L4 2" />
          ))}
          {CLIPS_DOWN.map(([x, y]) => (
            <path key={x + "," + y} transform={`translate(${x} ${y})`} d="M-4-4L4-1M-4 2L4 5" />
          ))}
        </g>
        <g fill="#00f01a">
          {BOLTS.map(([x, y]) => (
            <path key={x + "," + y} transform={`translate(${x} ${y})`} d="M-7-4L-4-6 1-3 6-4V4L3 6-3 3-7 0z" />
          ))}
        </g>
        <g fill="#ffff00">
          {CAMS.map(([x, y]) => (
            <path key={x + "," + y} transform={`translate(${x} ${y})`} d="M-10-2L-4-6 2-4 9-5 11 0 9 4 4 3-1 8-4 9-4 4-8 2z" />
          ))}
        </g>
        <path d="M703 888V925M703 925L739 908M703 925L667 908M696 927l7-3 7 3-7 4z" stroke="#e6e8ea" fill="none" />
        <g fill="#e6e8ea" fontFamily="Lato" fontWeight="300" fontSize="18" textAnchor="middle">
          <text x="714" y="886">Z</text><text x="675" y="903">Y</text><text x="749" y="906">X</text>
        </g>
      </g>
    </svg>
  );
}

function ViewCube() {
  return (
    <svg viewBox="0 0 112 124" className="absolute right-[16px] top-[60px] h-[124px] w-[112px]" aria-label="ViewCube">
      <ellipse cx="46" cy="73" rx="57" ry="38" fill="none" stroke="#4b4f56" strokeWidth="12" />
      <path d="M45 9L80 27V65L45 86 10 65V27z" fill="#222830" opacity=".5" />
      <path d="M45 9L80 27 45 46 10 27z" fill="#cacbcc" stroke="#eee" strokeWidth=".6" />
      <path d="M10 27L45 46V86L12 66z" fill="#b4b5b7" stroke="#8a8a8a" strokeWidth=".6" />
      <path d="M45 46L80 27 78 64 45 86z" fill="#a5a6a8" stroke="#8a8a8a" strokeWidth=".6" />
      <g fill="#4b4d50" fontFamily="Noto Sans CJK SC" fontSize="19" textAnchor="middle">
        <text transform="matrix(.87 .5 -.87 .5 42 31)">上</text>
        <text transform="matrix(.87 .5 0 1 28 70)">左</text>
        <text transform="matrix(.87 -.5 0 1 62 69)">前</text>
      </g>
      <g fill="#a9abae" fontFamily="Noto Sans CJK SC" fontSize="14" textAnchor="middle">
        <text transform="matrix(.87 -.3 .5 .8 86 49)">东</text>
        <text fontSize="19" transform="matrix(.87 .5 -.6 .7 90 103)">南</text>
      </g>
    </svg>
  );
}

function NavBar() {
  return (
    <div className="absolute right-[4px] top-[236px] h-[212px] w-8 rounded-md border border-[#4e5256] bg-[#5c6063]">
      <svg viewBox="0 0 32 212" className="h-full w-full" fill="none" stroke="#484c50" strokeWidth="1.500" aria-label="导航栏">
        <circle cx="25" cy="5" r="3" /><path d="M23 3l4 4M27 3l-4 4" />
        <path d="M16 20h10v10a10 10 0 1 1-10-10z" /><circle cx="16" cy="30" r="5" /><circle cx="16" cy="30" r="7" />
        <path d="M13 49h6l-3 3z" fill="#484c50" /><path d="M3 56h26" strokeWidth=".7" />
        <path d="M10 84c-3-4-5-7-5-9 2-1 3 1 4 3l-1-9c1-2 2 0 3 2l1 5-1-11c1-2 3-1 3 1l1 9 2-9c1-1 3 0 2 2l-1 9 4-6c2 0 2 1 1 3l-4 10-1 2z" />
        <path d="M4 92l13 14M17 92L4 106M4 92v5M4 92h5M17 92h-5M4 106v-5M4 106h5" /><circle cx="20" cy="107" r="5" /><path d="M24 111l4 4" strokeWidth="3" />
        <path d="M13 120h6l-3 3z" fill="#484c50" />
        <path d="M14 150v-20h-3l5-6 5 6h-3v20zM11 135c-9 3-9 9 5 9s14-6 5-9M3 142l5 5M8 138l-4 4" />
        <path d="M13 157h6l-3 3z" fill="#484c50" /><path d="M3 164h26" strokeWidth=".7" />
        <path d="M4 169h6v6H4zM12 169h6v6h-6zM20 169h6v6h-6zM4 178h16v13H4z" /><path d="M9 181v7l6-4z" fill="#484c50" />
        <circle cx="25" cy="205" r="3" /><path d="M23 205h4" />
      </svg>
    </div>
  );
}

function Viewport() {
  return (
    <div className="relative ml-1 flex-1 self-stretch overflow-hidden bg-[#212830]">
      <Model />
      <button className="absolute left-[3px] top-[5px] text-xs leading-[18px] text-[#e2e4e6]">[−][自定义视图][二维线框 ]</button>
      <div className="absolute right-[10px] top-[9px] flex items-center gap-[9px]">
        <button aria-label="最小化视口" className="mt-2 h-[4px] w-[10px] bg-white" />
        <button aria-label="还原视口"><svg viewBox="0 0 11 11" className="size-[11px]"><path d="M3 3V1h7v7H8M1 3h7v7H1z" fill="none" stroke="#fff" strokeWidth="2" /></svg></button>
        <button aria-label="关闭视口"><Cross className="h-[11px] w-[11px]" edge="none" /></button>
      </div>
      <ViewCube />
      <button className="absolute right-[59px] top-[193px] flex h-[18px] w-[48px] items-center justify-center gap-[6px] rounded bg-[#a2a4b4] font-['Liberation_Sans'] text-[11px] text-[#5d6070]">
        WCS
        <svg viewBox="0 0 9 5" className="h-[5px] w-[9px]"><path d="M.5.5h8l-4 4z" fill="none" stroke="#d5d6df" /></svg>
      </button>
      <NavBar />
    </div>
  );
}

/* ---------- hardware dialog ---------- */

const Folder = ({ open }) => (
  <svg viewBox="0 0 16 16" className="mx-[2px] size-[15px] shrink-0" aria-hidden="true">
    <path d="M1 3h5l2 2h7v9H1z" fill="#f7c64a" stroke="#a8761a" strokeWidth=".8" />
    {open ? <path d="M4 8h12l-2 6H2z" fill="#fff0a0" stroke="#a8761a" strokeWidth=".8" /> : <path d="M1 6h14v8H1z" fill="#ffe27d" stroke="#a8761a" strokeWidth=".8" />}
  </svg>
);
const ToolsIcon = () => (
  <svg viewBox="0 0 16 16" className="mr-[3px] size-[15px] shrink-0" aria-hidden="true">
    <path d="M3 1l3 3-2 3-3-2q-1 3 3 4l7 7 3-2-7-7q0-5-4-6z" fill="#999" stroke="#555" strokeWidth=".5" />
    <path d="M14 4L4 14l-2 1-1-2 9-9-1-2 2-2 5 4-2 2z" fill="#3a3a3a" />
  </svg>
);

const TREE = [
  ["铰链", "+"], ["连接件", "-"], ["偏心件", ""], ["圆榫", ""], ["层板托/层板销", ""], ["吊码", "+"], ["抽屉滑轨", "+"], ["螺钉/螺丝", "+"],
];

function Tree() {
  return (
    <ul role="tree" className="w-[160px] shrink-0 border border-[#d9d9d9] text-xs leading-[18px] text-black">
      {TREE.map(([t, k]) => (
        <li key={t} role="treeitem" aria-selected={t === "偏心件"}>
          <button className={"flex h-[18px] w-full items-center whitespace-nowrap " + (t === "偏心件" ? "bg-[#ffe48d]" : "")}>
            {k ? (
              <>
                <span className="ml-[3px] grid size-[9px] shrink-0 place-items-center border border-[#888] bg-white">
                  <svg viewBox="0 0 5 5" className="size-[5px]"><path d={k === "+" ? "M0 2.500h5M2.500 0v5" : "M0 2.500h5"} stroke="#000" /></svg>
                </span>
                <span className="w-[3px] shrink-0 border-t border-dotted border-[#888]" />
                <Folder open={k === "-"} />
              </>
            ) : (
              <>
                <span className="ml-[7px] h-full w-[17px] shrink-0 border-x border-dotted border-[#999]" />
                <span className="w-[8px] shrink-0 border-t border-dotted border-[#999]" />
                <ToolsIcon />
              </>
            )}
            <span>{t}</span>
          </button>
        </li>
      ))}
    </ul>
  );
}

const Sort = () => (
  <svg viewBox="0 0 8 12" className="h-3 w-2 shrink-0 text-[#bbb]" aria-hidden="true">
    <path d="M4 0l4 5H0zM4 12l4-5H0z" fill="currentColor" />
  </svg>
);

function Grid({ cols, rows, name, width, className }) {
  return (
    <div className={"border border-[#d9d9d9] bg-white " + className}>
      <div className="h-[25px] bg-[#e6e6e6]">
        <table className={"table-fixed border-collapse text-xs leading-4 text-[#111] " + width} aria-label={name}>
          <colgroup>
            <col className="w-[30px]" />
            {cols.map(([c, w]) => <col key={c} className={w} />)}
          </colgroup>
          <thead>
            <tr className="h-[25px] bg-[#e6e6e6]">
              <th className="border-b border-r border-[#cfcfcf] p-0"><input type="checkbox" aria-label={name + "全选"} className="mt-[3px] size-[13px] appearance-none border border-[#8e8f8f] bg-[#f4f4f4] shadow-[inset_0_0_0_1px_white,inset_2px_2px_3px_#bbb]" /></th>
              {cols.map(([c, , tight]) => (
                <th key={c} className="overflow-hidden border-b border-r border-[#cfcfcf] p-0 font-normal">
                  <button className={"flex w-full items-center gap-1 overflow-hidden whitespace-nowrap " + (tight ? "pl-1" : "justify-center")}>
                    {c}<Sort />
                  </button>
                </th>
              ))}
            </tr>
          </thead>
          <tbody>
            {rows.map((r, i) => (
              <tr key={r[0]} className="h-[25px]">
                <th className="border-b border-r border-[#cfcfcf] bg-[#e6e6e6] p-0 font-normal">{i + 1}</th>
                {r.map((v, j) => (
                  <td key={j} className={"overflow-hidden whitespace-nowrap border-b border-r border-[#cfcfcf] bg-white py-0 " + (j === 2 ? "pl-1 pr-0 text-left" : "px-0 text-center")}>{v}</td>
                ))}
              </tr>
            ))}
          </tbody>
        </table>
      </div>
    </div>
  );
}

const COLS1 = [["名称", "w-[110px]"], ["代号", "w-[90px]"], ["说明", "w-[90px]"], ...["H3", "D3", "H2", "D2", "L1", "H1", "D1"].map((c) => [c, "w-[30px]", true])];
const ROWS1 = [
  ["偏心件三合一", "18mmPXJ", "18mm板件适用", "8", "10", "31", "8", "34.5", "4", "15"],
  ["皇朝偏心件", "HCPXJ", "皇朝偏心件试验", "12", "10", "31", "8", "29", "4", "15"],
];
const COLS2 = [["名称", "w-[102px]"], ["型号", "w-[83px]"], ["规格", "w-[83px]"], ["数量", "w-[47px]"], ["来源", "w-[65px]"], ["供应商", "w-[65px]"], ["说明", "w-[62px]"]];

function Diagram() {
  return (
    <svg viewBox="0 0 250 200" className="h-[200px] w-[250px] shrink-0 bg-black" aria-label="偏心件尺寸图">
      <path d="M60.500 0V200M105.500 0V200" stroke="#aaa" />
      <path d="M80.500 85.500H105V110.500H80.500zM80 90.500h25M80 97.500h25M80 105.500h25M105 88.500h42M105 91.500h42M105 97.500h42M105 103.500h42M105 107.500h42" stroke="#ccc" fill="none" />
      <circle cx="165" cy="97.500" r="19" fill="none" stroke="#ddd" />
      <path d="M80.500 66V84M80 68.500H105M41 85.500H79M41 110.500H79M45.500 86V110M131.500 62V107M226 68.500H170.500L166 78M166 78.500H204M166 116.500H204M201.500 79V116M105 130.500H150M149.500 99V133M105 157.500H167M167.500 117V161" stroke="#b9b900" fill="none" />
      <path d="M81 68.500l6-2v4zM105 68.500l-6-2v4zM45.500 86l-2 6h4zM45.500 110l-2-6h4zM201.500 79l-2 6h4zM201.500 116l-2-6h4zM106 130.500l6-2v4zM149 130.500l-6-2v4zM106 157.500l6-2v4zM167 157.500l-6-2v4zM131.500 89l-2 6h4zM131.500 106l-2-6h4z" fill="#ff0" />
      <g fill="#e01616" fontFamily="Noto Sans CJK SC" fontSize="10.500">
        <text x="66" y="20">连接板</text><text x="153" y="19">偏心轮所在部件</text>
      </g>
      <g fill="#e8e800" fontFamily="Noto Sans, Noto Sans CJK SC" fontSize="10">
        <text x="173" y="53">板件1/2厚</text><text x="173" y="65">度+H1深度</text>
      </g>
      <g fill="#ff0" stroke="#ff0" strokeWidth=".3" fontFamily="Liberation Sans" fontSize="17">
        <text x="81" y="65">H3</text><text x="132" y="72">D2</text><text x="18" y="104">D3</text><text x="202" y="104">D1</text><text x="117" y="127">H2</text><text x="126" y="154">L1</text>
      </g>
    </svg>
  );
}

function Dialog() {
  return (
    <section role="dialog" aria-label="五金安装设置" className="absolute right-[151px] top-[230px] z-20 flex h-[598px] w-[998px] flex-col rounded-md border border-[#c9d3dc] bg-[#22303f] px-[6px] pb-[6px] shadow-[0_0_14px_4px_rgba(0,0,0,0.75)]">
      <div className="-mx-[6px] flex h-[27px] shrink-0 items-center rounded-t-md bg-gradient-to-r from-[#838d97] via-[#22303f] via-20% to-[#7f8994] px-[6px]">
        <svg viewBox="0 0 16 16" className="size-4" aria-hidden="true">
          <rect width="16" height="16" rx="3" fill="#7d4a3a" />
          <path d="M8 2l5 3v6l-5 3-5-3V5z" fill="#eee" />
          <path d="M8 8v6M8 8l5-3M8 8L3 5M3 8l5 3 5-3M5.500 6.500v6M10.500 6.500v6M5.500 3.500l5 3M10.500 3.500l-5 3" stroke="#7d4a3a" strokeWidth=".8" fill="none" />
        </svg>
        <h2 className="ml-[3px] rounded-full px-[2px] text-xs leading-4 text-black [text-shadow:0_0_5px_#dfe6ee,0_0_9px_#dfe6ee,0_0_14px_#dfe6ee]">五金安装设置</h2>
        <button aria-label="关闭" className="ml-auto mr-[-2px] grid h-[19px] w-[48px] place-items-center self-start rounded-b border border-t-0 border-[#ddd] bg-gradient-to-b from-[#d79a90] via-[#b9402b] to-[#c85a3c]"><Cross className="h-[11px] w-3" /></button>
      </div>
      <div className="flex min-h-0 flex-1 gap-[10px] overflow-hidden border border-[#d5dbe0] bg-[#efefef] pl-1 pt-[45px]">
        <div className="flex pb-[5px]"><Tree /></div>
        <div className="flex w-[539px] shrink-0 flex-col gap-[5px]">
          <Grid name="连接件" cols={COLS1} rows={ROWS1} width="w-[530px]" className="h-[165px] shrink-0" />
          <Grid name="配件" cols={COLS2} rows={[]} width="w-[537px]" className="h-[197px] shrink-0" />
          <Grid name="附件" cols={COLS2} rows={[]} width="w-[537px]" className="flex-1 border-b-0" />
        </div>
        <Diagram />
      </div>
    </section>
  );
}

/* ---------- command line and status bar ---------- */

function CommandLine() {
  return (
    <div className="mt-[2px] flex h-[52px] shrink-0 border border-[#777]">
      <div className="flex w-[22px] shrink-0 flex-col items-center gap-2 bg-gradient-to-b from-[#858585] to-[#333] pt-1">
        <span className="h-[5px] w-[17px] bg-[radial-gradient(#ccc_1px,transparent_1px)] bg-[size:3px_3px]" />
        <button aria-label="关闭命令行"><Cross className="size-[10px]" edge="none" /></button>
        <button aria-label="自定义"><svg viewBox="0 0 14 14" className="size-[14px]"><path d="M3 0l3 3-1 2-2 1-3-3q-1 5 4 5l6 6 3-2-6-6Q7 1 3 0z" fill="#eee" /></svg></button>
      </div>
      <div className="flex flex-1 flex-col">
        <output className="h-[29px] border-b border-[#777] bg-[#c8c8c8] pl-[2px] pt-[10px] text-[13px] leading-4 text-black">调整完成</output>
        <label className="flex flex-1 items-center bg-white pl-[5px]">
          <span className="grid h-[13px] w-[15px] place-items-center border border-[#9aa] bg-[#e6e9ee]">
            <svg viewBox="0 0 12 10" className="h-[10px] w-3"><path d="M1 2l3 3-3 3M6 8h5" stroke="#445" fill="none" /></svg>
          </span>
          <Down className="mx-[3px] h-[3px] w-[6px] text-[#888]" />
          <input aria-label="命令" defaultValue="HardWareLib" className="flex-1 font-['DejaVu_Sans_Mono'] text-xs text-black outline-none" />
        </label>
      </div>
    </div>
  );
}

const gy = "#bdbdbd";
const bl = "#2a8cf0";
const Cube = () => <path d="M8 1l6 3.500v7l-6 3.500-6-3.500v-7zM8 8v7M8 8l6-3.500M8 8L2 4.500" fill="none" stroke={gy} />;
const STATUS = {
  grid: <path d="M4.500 0v16M8.500 0v16M12.500 0v16M0 4.500h16M0 8.500h16M0 12.500h16" stroke={gy} />,
  dots: <path d="M1 1.500h14M1 4.500h14M1 7.500h14M1 10.500h14M1 13.500h14" stroke="#d0d0d0" strokeWidth="1" strokeDasharray="1 2" />,
  infer: <><path d="M9 8V1h4v3H9" fill="none" stroke={gy} strokeWidth="1.500" /><path d="M5 9h5v6H5z" fill={gy} /></>,
  dyn: <><path d="M4 1v8M0 5h8" stroke={bl} strokeWidth="1.500" /><path d="M7 10h9v4H7z" fill={bl} stroke={bl} strokeWidth="1" /></>,
  ortho: <path d="M3 1v13h13M3 9h5v5" fill="none" stroke={gy} strokeWidth="1.500" />,
  polar: <><circle cx="8" cy="9" r="6" fill="none" stroke={gy} strokeWidth="1.500" /><path d="M8 9h8M8 9l5-7" stroke={gy} strokeWidth="1.500" /></>,
  iso: <path d="M0 0l16 15M8 0v16" fill="none" stroke={gy} strokeWidth="1.300" />,
  otrack: <path d="M15 14H2L14 2M7 9v4" fill="none" stroke={bl} strokeWidth="1.500" />,
  osnap: <><path d="M3 3h11v11H3z" fill="none" stroke={bl} strokeWidth="1.500" /><path d="M0 0h5v5H0z" fill="#0d2" stroke="#000" /></>,
  lwt: <path d="M0 2.500h16M0 7.500h9M0 12.500h13" stroke={gy} strokeWidth="3" />,
  trans: <><path d="M1 1h14v14H1z" fill="#0d4a8f" stroke={bl} /><path d="M1 3h14M1 7h14M1 11h14" stroke="#3f9bff" strokeWidth="2" strokeDasharray="2 2" /><path d="M3 5h12M3 9h12M3 13h12" stroke="#3f9bff" strokeWidth="2" strokeDasharray="2 2" /></>,
  cycle: <><path d="M3 0v6M0 3h6" stroke={gy} /><path d="M7 7h8v8H7z" fill="#7fa96a" /><path d="M5 12V5h7" stroke={gy} fill="none" /></>,
  osnap3: <><Cube /><path d="M0 0h5v5H0z" fill="#0d2" stroke="#000" /></>,
  ducs: <><path d="M2 1v13h13M2 14l9-8" fill="none" stroke={bl} strokeWidth="1.500" /><path d="M12 1l-3 5h3l-1 4 4-6h-3l2-3z" fill={bl} /></>,
  filter: <Cube />,
  gizmo: <><path d="M8 1l6 3.500v7l-6 3.500-6-3.500v-7z" fill="none" stroke={gy} strokeDasharray="3 1" /><path d="M8 0v8" stroke={bl} strokeWidth="1.500" /><circle cx="8" cy="8" r="2" fill="none" stroke={gy} /><circle cx="2.500" cy="12" r="2" fill="none" stroke="#1c3" strokeWidth="1.500" /><circle cx="13.500" cy="12" r="2" fill="none" stroke="#e22" strokeWidth="1.500" /></>,
  ann1: <><path d="M7 2l2 4 0 3 6 6h-4l-3-4-3 4H1l5-6 0-3z" fill={bl} /><circle cx="12" cy="3" r="2" fill="none" stroke={bl} /></>,
  ann2: <><path d="M6 2l2 4 0 3 6 6h-4l-3-4-3 4H0l5-6 0-3z" fill={gy} /><path d="M12 0l-2 4h2l-1 4 4-5h-2l1-3z" fill={gy} /></>,
  ann3: <path d="M8 0l2 6v3l5 6h-4l-3-4-3 4H1l5-6V6z" fill={gy} />,
  gear: <><circle cx="8" cy="8" r="4" fill="none" stroke={gy} strokeWidth="4" /><circle cx="8" cy="8" r="6.500" fill="none" stroke={gy} strokeWidth="2" strokeDasharray="3 2" /></>,
  plus: <path d="M8 1v14M1 8h14" stroke={gy} strokeWidth="2" />,
  ruler: <><path d="M6 0h5v16H6z" fill={gy} /><path d="M8 3h3M8 6h3M8 9h3M8 12h3" stroke="#555" /></>,
  quick: <path d="M4 2h8v12H4zM4 5h8M6 8h1M8 8h3M6 10h1M8 10h3M6 12h1M8 12h3" fill="none" stroke={gy} />,
  perf: <><circle cx="8" cy="8" r="7.500" fill="#06529e" stroke="#1689f2" /><path d="M8 11l5-3" stroke="#4fb0ff" strokeWidth="1.500" /></>,
  isolate: <><path d="M1 1h6v6H1zM8 9l4 6H4z" fill="none" stroke={gy} strokeWidth="1.300" /><circle cx="12" cy="6" r="3" fill="none" stroke={gy} strokeWidth="1.300" /></>,
  clean: <><path d="M1 2h15v12H1z" fill="none" stroke={gy} strokeWidth="1.500" /><path d="M9 4h5v5zM3 7v5h5zM5 10l2-2M10 8l2-2" fill="#eee" stroke="#eee" /></>,
  menu: <path d="M0 2.500h16M0 7.500h16M0 12.500h16" stroke="#d0d0d0" strokeWidth="1.500" />,
};
const WD = { 12: "w-3", 14: "w-[14px]", 16: "w-4", 18: "w-[18px]", 22: "w-[22px]", 24: "w-6", 26: "w-[26px]", 30: "w-[30px]" };
/* each group: [starts a framed block, items] */
const GROUPS = [
  [1, [["grid", 24], ["dots", 24], ["v", 16]]],
  [1, [["infer", 24]]],
  [0, [["dyn", 24]]],
  [0, [["ortho", 24], ["polar", 24], ["v", 14], ["iso", 26], ["v", 14]]],
  [0, [["otrack", 26], ["osnap", 22], ["v", 16]]],
  [0, [["lwt", 24], ["v", 16]]],
  [0, [["trans", 24]]],
  [0, [["cycle", 24]]],
  [0, [["osnap3", 24], ["v", 16]]],
  [1, [["ducs", 24], ["filter", 24], ["v", 16], ["gizmo", 22], ["v", 18]]],
  [1, [["ann1", 24], ["ann2", 24], ["ann3", 24], ["scale", 0]]],
  [1, [["gear", 24], ["v", 16]]],
  [0, [["plus", 24]]],
  [1, [["ruler", 26], ["units", 0]]],
  [0, [["quick", 24]]],
  [1, [["perf", 26]]],
  [1, [["isolate", 30]]],
  [1, [["clean", 24], ["menu", 24]]],
];

function StatusBar() {
  return (
    <div className="ml-auto flex h-[27px] items-stretch bg-[#4d4d4d] text-xs text-white">
      <output className="flex w-[212px] items-center justify-end border border-[#7b7b7b] pr-[5px] text-[#a9a9a9]">-4364.0237, 9898.5863, 0.0000</output>
      <button className="ml-px w-[30px] border border-[#7b7b7b] font-medium">模型</button>
      {GROUPS.map(([gap, g], i) => (
        <div key={i} className={"flex items-center border-y border-l border-[#7b7b7b] last:border-r " + (gap ? "ml-px" : "")}>
          {g.map(([n, w], j) => {
            if (n === "v") return <button key={j} aria-label="更多" className={"grid place-items-center " + WD[w]}><Down className="h-[5px] w-[7px] text-white" /></button>;
            if (n === "scale") return <button key={j} className="flex w-[79px] items-center gap-1 whitespace-nowrap pl-[4px]">1:1 / 100%<Down className="h-[5px] w-[7px] text-white" /></button>;
            if (n === "units") return <button key={j} className="flex w-[71px] items-center justify-between pl-[3px] pr-1 font-medium">小数<Down className="h-[5px] w-[7px] text-white" /></button>;
            return <button key={j} aria-label={n} className={"grid place-items-center " + WD[w]}><svg viewBox="0 0 16 16" className="size-4">{STATUS[n]}</svg></button>;
          })}
        </div>
      ))}
    </div>
  );
}

function BottomRow() {
  return (
    <footer className="flex h-[31px] shrink-0 items-start bg-[#383838]">
      <div className="flex h-[18px] pl-[12px] text-xs leading-[18px]" role="tablist">
        {["模型", "布局1", "布局2"].map((t, i) => (
          <button key={t} role="tab" aria-selected={i === 0} className={"relative " + (i === 0 ? "w-[46px] font-medium text-white" : "w-[54px] text-[#b5b5b5]")}>
            <svg viewBox="0 0 54 17" preserveAspectRatio="none" className="absolute inset-0 h-full w-full" aria-hidden="true">
              <path d="M0 0C8 2 4 17 12 17H42C50 17 46 2 54 0z" fill={i === 0 ? "#7c7c7c" : "#585858"} />
            </svg>
            <span className="relative">{t}</span>
          </button>
        ))}
        <button aria-label="新建布局" className="ml-[6px] grid w-[20px] place-items-center rounded-br-xl rounded-tl-xl bg-[#505050]">
          <svg viewBox="0 0 8 8" className="size-[7px]"><path d="M4 0v8M0 4h8" stroke="#ccc" strokeWidth="2" /></svg>
        </button>
      </div>
      <div className="ml-auto pt-[2px]"><StatusBar /></div>
    </footer>
  );
}

export default function App() {
  return (
    <div className="relative flex h-screen min-h-[900px] flex-col overflow-hidden border-t border-[#1c2a3c] bg-[#b0d2f5] px-2 pb-[7px] font-['Noto_Sans','Noto_Sans_CJK_SC',sans-serif] text-xs">
      <TitleBar />
      <div className="flex min-h-0 flex-1 flex-col border-x border-[#666] bg-[#5b5b5b]">
        <MenuRow />
        <Ribbon />
        <DocTabs />
        <ToolRows />
        <div className="flex min-h-0 flex-1 items-start pr-1">
          <SideBar items={["line", "xline", "pline", "polygon", "rect", "arc", "circle", "cloud", "spline", "ellipse", "ellarc", "insert", "mkblock", "point", "hatch", "gradient", "region", "table", "mtext", "addsel"]} />
          <Viewport />
          <div className="ml-1 grid gap-px">
            <SideBar items={["erase", "copyobj", "mirror", "offset", "array", "move", "rotate", "scale", "stretch", "trim", "extend", "breakpt", "brk", "join", "chamfer", "fillet", "blend", "explode"]} />
            <SideBar items={["front", "back", "above", "under", "textfront", "hatchback"]} />
          </div>
        </div>
        <CommandLine />
        <BottomRow />
      </div>
      <button aria-label="Autodesk" className="absolute left-2 top-[7px] z-20 flex h-[41px] w-10 items-center justify-center border border-[#222] bg-gradient-to-b from-[#cfcfcf] to-[#7d7d7d]">
        <svg viewBox="0 0 24 26" className="h-[26px] w-6" aria-hidden="true">
          <path d="M10 1h4l9 19-1 5-6-1-1-4H9l-1 4-6 1-1-5z" fill="#c9191e" />
          <path d="M10 1h4L9 20l-1 4-6 1-1-5z" fill="#b01418" />
          <path d="M5 14q10-6 13-3l3 6q-6-4-12 3z" fill="#8c0f13" />
        </svg>
        <Down className="h-[5px] w-[7px] text-[#333]" />
      </button>
      <div className="absolute right-0 top-[495px] h-[56px] w-2 rounded border border-[#222] bg-[#4b5563] pt-5">
        <div className="h-[33px] bg-[repeating-linear-gradient(#35d065_0_2px,#1d6b38_2px_3px)]" />
      </div>
      <Dialog />
    </div>
  );
}
